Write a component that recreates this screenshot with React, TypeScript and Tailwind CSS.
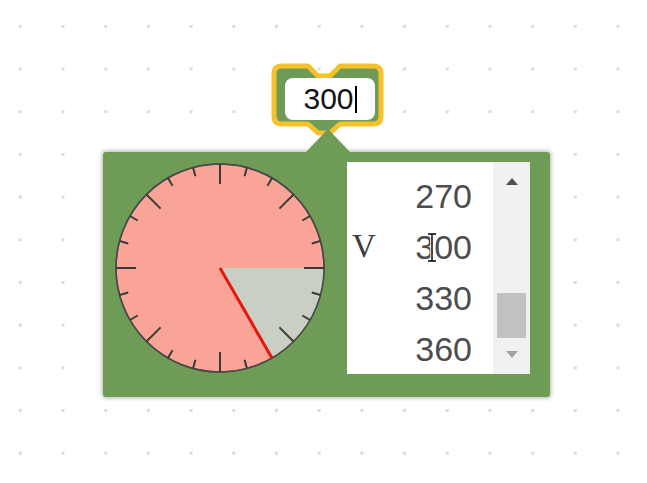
import React from "react";

const GREEN = "#6e9b56";

function Gauge() {
  const c = 105;
  const r = 104;
  const ticks = [];
  for (let a = 0; a < 360; a += 15) {
    const rad = (a * Math.PI) / 180;
    const len = a % 45 === 0 ? 20 : 9;
    ticks.push(
      <line
        key={a}
        x1={c + r * Math.cos(rad)}
        y1={c + r * Math.sin(rad)}
        x2={c + (r - len) * Math.cos(rad)}
        y2={c + (r - len) * Math.sin(rad)}
        stroke="#3a3a3a"
        strokeWidth={2}
      />
    );
  }
  const end = (60 * Math.PI) / 180;
  const ex = c + r * Math.cos(end);
  const ey = c + r * Math.sin(end);
  return (
    <svg width={210} height={210} viewBox="0 0 210 210" className="shrink-0">
      <circle cx={c} cy={c} r={r} fill="#f9a497" stroke="#4a4a4a" strokeWidth={1.5} />
      <path d={`M${c},${c} L${c + r},${c} A${r},${r} 0 0 1 ${ex},${ey} Z`} fill="#c9cfc3" />
      <circle cx={c} cy={c} r={r} fill="none" stroke="#4a4a4a" strokeWidth={1.5} />
      {ticks}
      <line x1={c} y1={c} x2={ex} y2={ey} stroke="#e8160c" strokeWidth={3} />
    </svg>
  );
}

function Bubble() {
  // block outline, drawn in its own box starting at (262,56)
  const d =
    "M20,10 L46,10 L56,20 L68,20 L78,10 L111,10 Q119,10 119,18 L119,60 Q119,68 111,68 L78,68 L68,77 L56,77 L46,68 L20,68 Q12,68 12,60 L12,18 Q12,10 20,10 Z";
  return (
    <div className="absolute left-[262px] top-[56px] w-[130px] h-[82px]">
      <svg width={130} height={82} viewBox="0 0 130 82" className="absolute inset-0">
        <path d={d} fill={GREEN} stroke="#f6c12a" strokeWidth={5} strokeLinejoin="round" />
      </svg>
      <div className="absolute left-[23px] top-[22px] w-[90px] h-[42px] rounded-lg bg-white flex items-center justify-center">
        <span className="text-[30px] leading-none text-[#111] font-['Liberation_Sans',Arial,sans-serif]">300</span>
        <span className="w-[2px] h-[27px] bg-black ml-[1px]" />
      </div>
    </div>
  );
}

function Row({ value, checked }: { value: string; checked?: boolean }) {
  return (
    <div className="h-[51px] flex items-center pl-[5px] pr-[21px]">
      <span className="w-[24px] text-[33px] leading-none text-[#3d3d3d] font-['Liberation_Serif',serif]">
        {checked ? "V" : ""}
      </span>
      <span className="flex-1 text-right text-[34px] leading-none text-[#4d4d4d] font-['Liberation_Sans',Arial,sans-serif]">
        {value}
      </span>
    </div>
  );
}

function List() {
  return (
    <div className="w-[183px] h-[212px] bg-white flex shrink-0">
      <div className="flex-1 pt-[8px] overflow-hidden">
        <Row value="270" />
        <Row value="300" checked />
        <Row value="330" />
        <Row value="360" />
      </div>
      <div className="w-[37px] bg-[#f1f1f1] flex flex-col">
        <div className="h-[36px] flex items-center justify-center pt-[2px]">
          <svg width={12} height={7} viewBox="0 0 12 7">
            <path d="M0,7 L6,0 L12,7 Z" fill="#505050" />
          </svg>
        </div>
        <div className="flex-1 flex flex-col px-[4px]">
          <div className="mt-[95px] h-[45px] bg-[#c1c1c1]" />
        </div>
        <div className="h-[36px] flex items-center justify-center pb-[4px]">
          <svg width={12} height={7} viewBox="0 0 12 7">
            <path d="M0,0 L12,0 L6,7 Z" fill="#a3a3a3" />
          </svg>
        </div>
      </div>
    </div>
  );
}

export default function App() {
  return (
    <div className="relative w-[647px] h-[483px] overflow-hidden bg-white bg-[radial-gradient(circle,#dcdcdc_1.4px,transparent_1.6px)] bg-[size:42.7px_42.7px] bg-[position:-1px_5px]">
      <Bubble />

      {/* dropdown panel */}
      <div className="absolute left-[103px] top-[152px] w-[447px] h-[245px] bg-[#6e9b56] rounded-[3px] shadow-[0_0_4px_1px_rgba(0,0,0,0.3)] flex items-start gap-[22px] pt-[10px] pl-[12px]">
        <svg width={46} height={24} viewBox="0 0 46 24" className="absolute left-[202px] top-[-23px]">
          <path d="M0,24 L23,0 L46,24 Z" fill={GREEN} />
        </svg>
        <div className="pt-[1px]">
          <Gauge />
        </div>
        <List />
      </div>

      {/* mouse I-beam */}
      <svg width={14} height={32} viewBox="0 0 14 32" className="absolute left-[425px] top-[232px]">
        <path d="M3,2 L11,2 M7,2 L7,29 M3,29 L11,29" stroke="#fff" strokeWidth={3.5} fill="none" />
        <path d="M3,2 L11,2 M7,2 L7,29 M3,29 L11,29" stroke="#000" strokeWidth={1.4} fill="none" />
      </svg>
    </div>
  );
}
